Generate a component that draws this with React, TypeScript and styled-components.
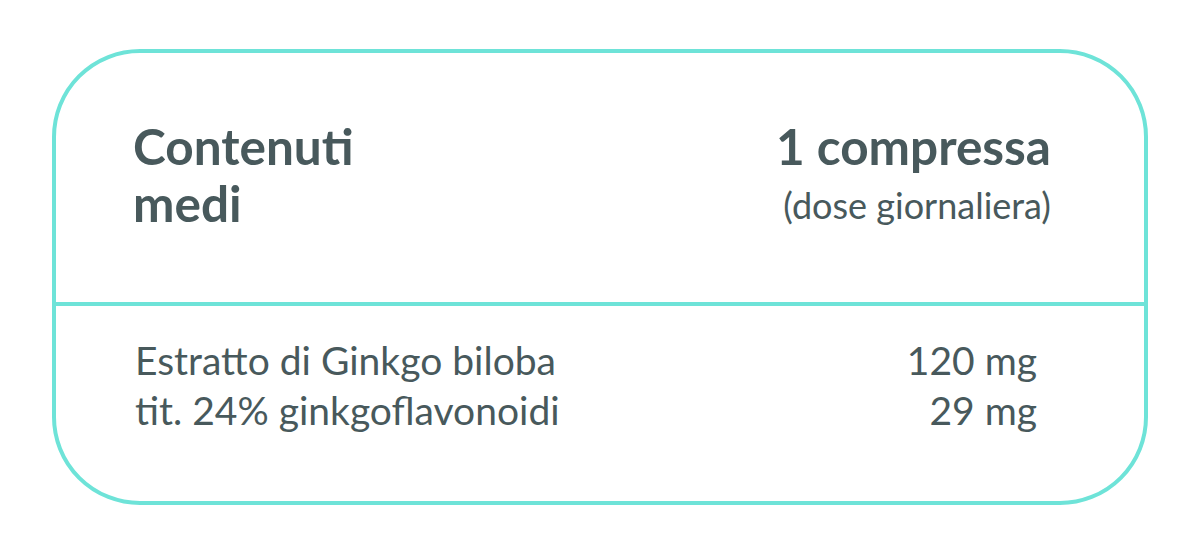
import { Fragment } from 'react'
import styled, { createGlobalStyle } from 'styled-components'

// Valori di base
const ink = '#48595c'
const teal = '#6ee3d8'

const Global = createGlobalStyle`
  html, body {
    margin: 0;
    padding: 0;
    background: #fff;
  }
  body {
    font-family: Lato, "Open Sans", sans-serif;
    color: ${ink};
  }
`

const Page = styled.div`
  width: 1200px;
  height: 551px;
  padding: 49px 52px 46px;
  box-sizing: border-box;
`

const Card = styled.div`
  height: 100%;
  border: 4px solid ${teal};
  border-radius: 88px;
  box-sizing: border-box;
  display: flex;
  flex-direction: column;
`

const Head = styled.div`
  height: 253px;
  border-bottom: 4px solid ${teal};
  box-sizing: border-box;
  display: grid;
  grid-template-columns: 1fr auto;
  padding: 65px 93px 0 77px;
`

const Title = styled.h2`
  margin: 0;
  font-size: 49.5px;
  line-height: 57px;
  font-weight: 700;
`

const Portion = styled.div`
  text-align: right;
`

const PortionMain = styled.div`
  font-size: 49.5px;
  line-height: 57px;
  font-weight: 700;
`

const PortionNote = styled.div`
  font-size: 36px;
  line-height: 60px;
`

const Body = styled.div`
  display: grid;
  grid-template-columns: 1fr auto;
  padding: 29px 107px 0 79px;
  font-size: 39px;
  line-height: 50px;
`

const Cell = styled.div<{ $right?: boolean }>`
  text-align: ${({ $right }) => ($right ? 'right' : 'left')};
`

const rows = [
  { name: 'Estratto di Ginkgo biloba', qty: '120 mg' },
  { name: 'tit. 24% ginkgoflavonoidi', qty: '29 mg' },
]

export default function App() {
  return (
    <Page>
      <Global />
      <Card>
        <Head>
          <Title>
            Contenuti
            <br />
            medi
          </Title>
          <Portion>
            <PortionMain>1 compressa</PortionMain>
            <PortionNote>(dose giornaliera)</PortionNote>
          </Portion>
        </Head>
        <Body>
          {rows.map((r) => (
            <Fragment key={r.name}>
              <Cell>{r.name}</Cell>
              <Cell $right>{r.qty}</Cell>
            </Fragment>
          ))}
        </Body>
      </Card>
    </Page>
  )
}
